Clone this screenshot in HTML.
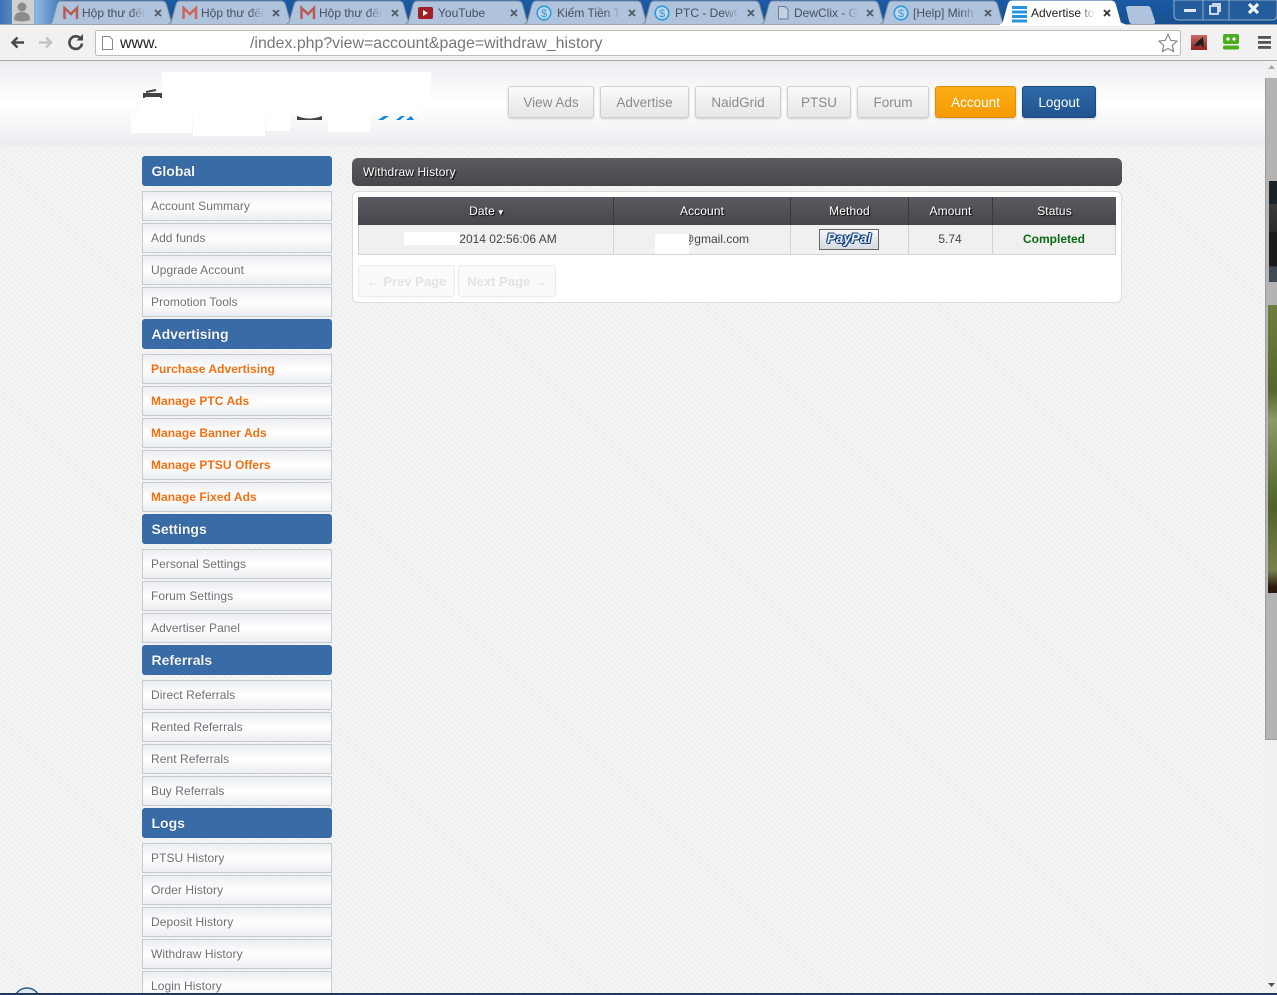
<!DOCTYPE html>
<html><head><meta charset="utf-8"><title>Advertise to</title>
<style>
html,body{margin:0;padding:0;width:1277px;height:995px;overflow:hidden;font-family:"Liberation Sans","Noto Sans CJK SC",sans-serif}
body{position:relative;background:#f2f4f3}
.a{position:absolute}
#bg{left:0;top:61px;width:1265px;height:932px;background:repeating-linear-gradient(45deg,#f4f5f4 0,#f4f5f4 2px,#eef0ef 2px,#eef0ef 4px)}
#hd{left:0;top:61px;width:1265px;height:85px;background:linear-gradient(#ecedf1 0,#f6f6f8 25%,#fff 50%,#f6f6f8 75%,#ecedf1 100%)}
.nb{position:absolute;top:86px;height:30px;border:1px solid #cfd0d4;border-radius:3px;background:linear-gradient(#fafafa,#e6e6e6);box-shadow:0 1px 2px rgba(0,0,0,.18);color:#8b8b8f;font-size:13.5px;line-height:32px;text-align:center;box-sizing:content-box}
.sh{position:absolute;left:142px;width:190px;height:30px;background:#396ba6;border-radius:3px;color:#f4f7fb;font-size:14px;font-weight:bold;line-height:31px;text-indent:9.5px;text-shadow:0 0 1px #1c3c66}
.si{position:absolute;left:142px;width:188px;height:28px;border:1px solid #c3cccf;background:linear-gradient(#ecedf1 0,#fff 50%,#ecedf1 100%);color:#6e7075;font-size:12px;letter-spacing:.06px;line-height:29px;text-indent:8px}
.o{color:#f26f12;font-weight:bold;letter-spacing:.05px}
.tt{position:absolute;font-size:12px;top:6px;color:#46505e;white-space:nowrap;overflow:hidden;height:16px;line-height:15px}
.f{-webkit-mask-image:linear-gradient(90deg,#000 75%,transparent 100%);mask-image:linear-gradient(90deg,#000 75%,transparent 100%)}
.th{position:absolute;top:197px;height:28px;background:linear-gradient(#5a5b60,#46474c);color:#fff;font-size:12px;letter-spacing:.1px;line-height:28px;text-align:center;text-shadow:1px 1px 1px #000;box-sizing:border-box}
.td{position:absolute;top:225px;height:30px;background:#f0f0f0;color:#444;font-size:12px;line-height:28px;text-align:center;border-bottom:1px solid #d2d4d4;border-right:1px solid #d2d4d4;box-sizing:border-box}
.w{position:absolute;background:#fff}
.pg{position:absolute;top:265px;height:30px;border:1px solid #eaeaea;border-radius:4px;background:#fafafa;color:#e3e3e3;font-size:13px;font-weight:bold;line-height:32px;text-align:center}
</style></head><body>

<!-- browser chrome -->
<svg class="a" style="left:0;top:0" width="1277" height="61" viewBox="0 0 1277 61">
<defs><linearGradient id="tb" x1="0" x2="0" y1="0" y2="1"><stop offset="0" stop-color="#1b5aa5"/><stop offset="1" stop-color="#17508f"/></linearGradient>
<linearGradient id="tl" x1="0" x2="1" y1="0" y2="0"><stop offset="0" stop-color="#3e70b4"/><stop offset=".6" stop-color="#8db4de"/><stop offset="1" stop-color="#3a74b8"/></linearGradient>
<linearGradient id="rd" x1="0" x2="0" y1="0" y2="1"><stop offset="0" stop-color="#c96a6a"/><stop offset="1" stop-color="#8f2525"/></linearGradient></defs>
<rect width="1277" height="25" fill="url(#tb)"/>
<rect width="62" height="25" fill="url(#tl)"/>
<rect x="12" y="0" width="22" height="24" fill="#cfcfcf"/>
<circle cx="22" cy="7" r="4.5" fill="#8b8b8b"/><path d="M14 20q0-8 8-8t8 8q-8 3-16 0z" fill="#8b8b8b"/>
<rect y="24" width="1277" height="37" fill="#f1f1f1"/>
<!-- inactive tabs -->
<g fill="#b0c3dc" stroke="#7d8ea6" stroke-width="1">
<path d="M49 24.500l3-2 5-18q1-3.500 4-3.500h101q3.500 0 4.500 3.500l5 18 3 2z"/>
<path d="M168 24.500l3-2 5-18q1-3.500 4-3.500h101q3.500 0 4.500 3.500l5 18 3 2z"/>
<path d="M286 24.500l3-2 5-18q1-3.500 4-3.500h101q3.500 0 4.500 3.500l5 18 3 2z"/>
<path d="M405 24.500l3-2 5-18q1-3.500 4-3.500h101q3.500 0 4.500 3.500l5 18 3 2z"/>
<path d="M524 24.500l3-2 5-18q1-3.500 4-3.500h101q3.500 0 4.500 3.500l5 18 3 2z"/>
<path d="M642 24.500l3-2 5-18q1-3.500 4-3.500h101q3.500 0 4.500 3.500l5 18 3 2z"/>
<path d="M761 24.500l3-2 5-18q1-3.500 4-3.500h101q3.500 0 4.500 3.500l5 18 3 2z"/>
<path d="M880 24.500l3-2 5-18q1-3.500 4-3.500h101q3.500 0 4.500 3.500l5 18 3 2z"/>
</g>
<!-- active tab -->
<path d="M1000 25l3-2 5-18q1-4 4-4h99q3.500 0 4.500 4l5 18 5 2z" fill="#fff" stroke="#fff"/>
<path d="M1126 8q0-2 3-2h19q2 0 3 3l4 12q.5 3-2 3h-21q-2 0-3-3z" fill="#b0c3dc"/>
<rect y="24" x="0" width="1000" height="1" fill="#9aa5b2"/><rect y="24" x="1125" width="152" height="1" fill="#9aa5b2"/>
<!-- window controls -->
<path d="M1174 0v15q0 5 5 5h93q5 0 5-5V0z" fill="#245c9c" stroke="#8fabcc"/>
<path d="M1203 0v20M1229 0v20" stroke="#8fabcc"/>
<rect x="1184" y="9" width="12" height="3" fill="#dfe6ee"/>
<path d="M1210 6h8v8h-8zM1212 4h8v8" fill="none" stroke="#dfe6ee" stroke-width="1.800"/>
<path d="M1249 4l9 9M1258 4l-9 9" stroke="#eef2f6" stroke-width="3.200"/>
<!-- gmail icons -->
<g fill="none" stroke-width="2.500"><path d="M64.500 19V8l6.500 6 6-6v11" stroke="#b85a55"/><path d="M183.500 19V8l6.500 6 6-6v11" stroke="#d0655a"/><path d="M301.500 19V8l6.500 6 6-6v11" stroke="#b85a55"/></g>
<rect x="418" y="7" width="15" height="12" rx="2" fill="#a01f26"/><path d="M423 10l5 3-5 3z" fill="#fff"/>
<g fill="#c6d6e8" stroke="#2f9bdd" stroke-width="1.600"><circle cx="544" cy="13" r="6.800"/><circle cx="662" cy="13" r="6.800"/><circle cx="901" cy="13" r="6.800"/></g>
<g font-family="Liberation Sans" font-size="11" fill="#2f9bdd" text-anchor="middle"><text x="544" y="17">$</text><text x="662" y="17">$</text><text x="901" y="17">$</text></g>
<path d="M778.500 6.500h6.500l3 3v9.500h-9.500z" fill="#c3d1e4" stroke="#6f7c8e"/>
<g fill="#2993e0"><rect x="1012" y="6" width="15" height="3"/><rect x="1012" y="10.500" width="15" height="3"/><rect x="1012" y="15" width="15" height="3"/><rect x="1012" y="19.500" width="15" height="3"/></g>
<!-- close marks -->
<g stroke="#4e5764" stroke-width="1.800">
<path d="M155 10l6 6M161 10l-6 6M273 10l6 6M279 10l-6 6M392 10l6 6M398 10l-6 6M511 10l6 6M517 10l-6 6M629 10l6 6M635 10l-6 6M748 10l6 6M754 10l-6 6M867 10l6 6M873 10l-6 6M985 10l6 6M991 10l-6 6"/>
<path d="M1104 10l6 6M1110 10l-6 6" stroke="#333"/></g>
<!-- nav arrows -->
<path d="M24 42.500H13M17.500 37.500l-5 5 5 5" fill="none" stroke="#4a4a4a" stroke-width="2.600"/>
<path d="M39 42.500h11M46 37.500l5 5-5 5" fill="none" stroke="#c4c4c4" stroke-width="2.600"/>
<path d="M80.500 38.500a6.300 6.300 0 1 0 1.500 5" fill="none" stroke="#4a4a4a" stroke-width="2.600"/><path d="M76.500 40.500h6.500v-6.500z" fill="#4a4a4a"/>
<!-- omnibox -->
<rect x="95.500" y="30.500" width="1085" height="25" rx="2" fill="#fff" stroke="#bcbcbc"/>
<path d="M102.500 36.500h7l3 3v10h-10z" fill="#fff" stroke="#8a8a8a"/>
<path d="M1168 34.500l2.700 5.800 6.300.8-4.600 4.300 1.200 6.200-5.600-3.100-5.600 3.100 1.200-6.200-4.600-4.300 6.300-.8z" fill="#fff" stroke="#7d7d7d" stroke-width="1.100"/>
<!-- extensions -->
<rect x="1191" y="35" width="16" height="15" fill="url(#rd)"/><path d="M1194 46l4-5 5-4 1 11-3-3-3 1z" fill="#1f1f1f"/>
<rect x="1223" y="34" width="16" height="10" rx="2" fill="#4cae1e"/><rect x="1223" y="45.500" width="16" height="4" rx="1.500" fill="#4cae1e"/><circle cx="1228" cy="39" r="1.600" fill="#fff"/><circle cx="1234" cy="39" r="1.600" fill="#fff"/>
<g fill="#555"><rect x="1258" y="36" width="13" height="2.800"/><rect x="1258" y="41" width="13" height="2.800"/><rect x="1258" y="46" width="13" height="2.800"/></g>
<rect y="60" width="1277" height="1" fill="#a9a9a9"/>
</svg>
<div class="tt f" style="left:82px;width:64px">Hộp thư đến</div>
<div class="tt f" style="left:201px;width:64px">Hộp thư đến</div>
<div class="tt f" style="left:319px;width:64px">Hộp thư đến</div>
<div class="tt" style="left:438px;width:64px">YouTube</div>
<div class="tt f" style="left:557px;width:64px">Kiếm Tiền Trên</div>
<div class="tt f" style="left:675px;width:64px">PTC - DewClix</div>
<div class="tt f" style="left:794px;width:64px">DewClix - Get</div>
<div class="tt f" style="left:913px;width:64px">[Help] Minh</div>
<div class="tt f" style="left:1031px;width:64px;color:#222">Advertise to</div>
<div class="a" style="left:120px;top:35px;font-size:15.900px;color:#222;line-height:18px">www.</div>
<div class="a" style="left:250px;top:35px;font-size:15.900px;color:#777;line-height:18px;white-space:nowrap">/index.php?view=account&amp;page=withdraw_history</div>

<!-- page -->
<div class="a" id="bg"></div>
<div class="a" id="hd"></div>
<svg class="a" style="left:140px;top:88px" width="280" height="36"><path d="M4 10V6h17v4M4 8h17M6 4l10-2" stroke="#444" stroke-width="2" fill="none"/><path d="M157 28q12 5 25 0v4h-25z" fill="#444"/><path d="M238 32l6-4h5l-6 4zM256 32l5-4h4l-5 4zM266 32l5-4 3 4z" fill="#1388d8"/></svg>
<div class="w" style="left:162px;top:72px;width:269px;height:38px"></div>
<div class="w" style="left:139px;top:98px;width:280px;height:17px"></div>
<div class="w" style="left:131px;top:113px;width:61px;height:20px"></div>
<div class="w" style="left:193px;top:113px;width:72px;height:23px"></div>
<div class="w" style="left:266px;top:113px;width:24px;height:18px"></div>
<div class="w" style="left:328px;top:113px;width:42px;height:19px"></div>

<div class="nb" style="left:508px;width:84px">View Ads</div>
<div class="nb" style="left:600px;width:87px">Advertise</div>
<div class="nb" style="left:695px;width:84px">NaidGrid</div>
<div class="nb" style="left:787px;width:62px">PTSU</div>
<div class="nb" style="left:857px;width:70px">Forum</div>
<div class="nb" style="left:935px;width:79px;background:linear-gradient(#fdae16,#f59a03);border-color:#e08e0a;color:#fff">Account</div>
<div class="nb" style="left:1022px;width:72px;background:linear-gradient(#2f6aa6,#1f5490);border-color:#1b4a80;color:#fff">Logout</div>

<!-- sidebar -->
<div class="sh" style="top:156px">Global</div>
<div class="si" style="top:191px">Account Summary</div>
<div class="si" style="top:223px">Add funds</div>
<div class="si" style="top:255px">Upgrade Account</div>
<div class="si" style="top:287px">Promotion Tools</div>
<div class="sh" style="top:319px">Advertising</div>
<div class="si o" style="top:354px">Purchase Advertising</div>
<div class="si o" style="top:386px">Manage PTC Ads</div>
<div class="si o" style="top:418px">Manage Banner Ads</div>
<div class="si o" style="top:450px">Manage PTSU Offers</div>
<div class="si o" style="top:482px">Manage Fixed Ads</div>
<div class="sh" style="top:514px">Settings</div>
<div class="si" style="top:549px">Personal Settings</div>
<div class="si" style="top:581px">Forum Settings</div>
<div class="si" style="top:613px">Advertiser Panel</div>
<div class="sh" style="top:645px">Referrals</div>
<div class="si" style="top:680px">Direct Referrals</div>
<div class="si" style="top:712px">Rented Referrals</div>
<div class="si" style="top:744px">Rent Referrals</div>
<div class="si" style="top:776px">Buy Referrals</div>
<div class="sh" style="top:808px">Logs</div>
<div class="si" style="top:843px">PTSU History</div>
<div class="si" style="top:875px">Order History</div>
<div class="si" style="top:907px">Deposit History</div>
<div class="si" style="top:939px">Withdraw History</div>
<div class="si" style="top:971px">Login History</div>

<!-- content -->
<div class="a" style="left:352px;top:158px;width:770px;height:28px;border-radius:6px;background:linear-gradient(#5a5b60,#47484d);color:#fff;font-size:12px;letter-spacing:.13px;line-height:28px;text-indent:11px;text-shadow:1px 1px 1px #000">Withdraw History</div>
<div class="a" style="left:352px;top:191px;width:768px;height:110px;background:#fff;border:1px solid #dcdedd;border-radius:6px"></div>
<div class="th" style="left:358px;width:256px;border-right:1px solid #393a3e;padding-left:3px">Date<span style="font-size:8px;margin-left:2px">▼</span></div>
<div class="th" style="left:614px;width:177px;border-right:1px solid #393a3e">Account</div>
<div class="th" style="left:791px;width:118px;border-right:1px solid #393a3e">Method</div>
<div class="th" style="left:909px;width:84px;border-right:1px solid #393a3e">Amount</div>
<div class="th" style="left:993px;width:123px">Status</div>
<div class="td" style="left:358px;width:256px;border-left:1px solid #d2d4d4;padding-left:44px">2014 02:56:06 AM</div>
<div class="td" style="left:614px;width:177px;text-align:right;padding-right:41px">@gmail.com</div>
<div class="td" style="left:791px;width:118px"></div>
<div class="td" style="left:909px;width:84px;padding-right:1px">5.74</div>
<div class="td" style="left:993px;width:123px;color:#0a6a14;font-weight:bold">Completed</div>
<div class="w" style="left:404px;top:232px;width:56px;height:13px"></div>
<div class="w" style="left:655px;top:234px;width:34px;height:20px"></div>
<div class="a" style="left:819px;top:229px;width:58px;height:19px;border:1px solid #666;background:linear-gradient(#f4f6f8,#d5dbe2);color:#eaf1fa;font:italic bold 13.500px/18px 'Liberation Sans',sans-serif;text-align:center;text-shadow:-1px 0 #153f78,1px 0 #153f78,0 -1px #153f78,0 1px #153f78,1px 1px #153f78,-1px -1px #153f78">PayPal</div>
<div class="pg" style="left:358px;width:95px">← Prev Page</div>
<div class="pg" style="left:458px;width:96px">Next Page →</div>

<!-- screenshot scrollbar -->
<div class="a" style="left:1265px;top:61px;width:12px;height:932px;background:#f0f0f0"></div>
<div class="a" style="left:1265px;top:78px;width:12px;height:662px;background:#b4b4b4;border-left:1px solid #9d9d9d;border-bottom:1px solid #9d9d9d;box-sizing:border-box"></div>
<svg class="a" style="left:1265px;top:61px" width="12" height="932"><path d="M3 8h7l-3.500-4z" fill="#a5a5a5"/><path d="M3 922h7l-3.500 4z" fill="#505050"/></svg>
<div class="a" style="left:1269px;top:181px;width:8px;height:101px;background:linear-gradient(#1a2127 0,#1a2127 23%,#3a3a3a 23%,#2c2c2c 50%,#1b1b1b 51%,#1b1b1b 84%,#3f4a55 85%)"></div>
<div class="a" style="left:1268px;top:305px;width:9px;height:288px;background:linear-gradient(#6f7f3e 0,#55672d 30%,#8a9a6a 40%,#4f6128 70%,#7a8150 92%,#2a1a10 98%)"></div>

<!-- bottom strip -->
<svg class="a" style="left:0;top:985px" width="60" height="10"><circle cx="27" cy="16" r="13" fill="#dfe7ee" stroke="#2f5f86" stroke-width="1.500"/></svg>
<div class="a" style="left:0;top:993px;width:1277px;height:2px;background:#1f3a5a"></div>
</body></html>
